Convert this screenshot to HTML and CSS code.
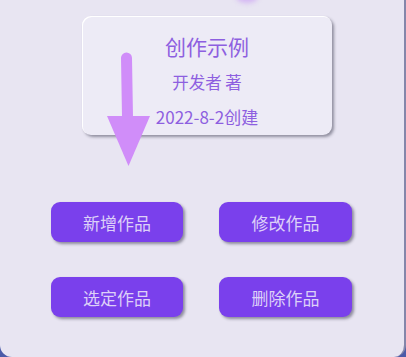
FILE: index.html
```html
<!DOCTYPE html>
<html lang="zh">
<head>
<meta charset="utf-8">
<link rel="stylesheet" href="styles.css">
</head>
<body>
<div class="panel">
  <div class="glow"></div>
  <div class="card">
    <div class="title">创作示例</div>
    <div class="author">开发者 著</div>
    <div class="date">2022-8-2创建</div>
  </div>
  <svg class="arrow" width="60" height="120" viewBox="0 0 60 120">
    <line x1="26.5" y1="8" x2="27.5" y2="67" stroke="#d08df9" stroke-width="11" stroke-linecap="round"/>
    <polygon points="7,66 50,66 28.5,116" fill="#d08df9"/>
  </svg>
  <div class="buttons">
    <div class="btn">新增作品</div>
    <div class="btn">修改作品</div>
    <div class="btn">选定作品</div>
    <div class="btn">删除作品</div>
  </div>
</div>
</body>
</html>
```

FILE: styles.css
```css
html, body {
  margin: 0;
  padding: 0;
  width: 406px;
  height: 357px;
  overflow: hidden;
  background: #4b5aa8;
  font-family: "Noto Sans CJK SC", "Noto Sans", sans-serif;
}
.panel {
  position: relative;
  width: 406px;
  height: 357px;
  box-sizing: border-box;
  background: #e8e5f2;
  border-right: 2px solid #8486aa;
  border-radius: 0 0 12px 12px;
  display: flex;
  flex-direction: column;
  padding-top: 16px;
}
.glow {
  position: absolute;
  left: 236px;
  top: -9px;
  width: 22px;
  height: 12px;
  border-radius: 50%;
  background: #d4b6f3;
  filter: blur(2.5px);
}
.card {
  margin-left: 82px;
  width: 250px;
  height: 119px;
  box-sizing: border-box;
  background: #edebf6;
  border-radius: 9px;
  box-shadow: inset 1px 1px 0 #ffffff, 2px 2px 3px rgba(40, 40, 60, 0.45);
  display: flex;
  flex-direction: column;
  align-items: center;
  color: #8d5fe0;
}
.title {
  font-size: 21px;
  line-height: 28px;
  margin-top: 16px;
}
.author {
  font-size: 16.5px;
  line-height: 22px;
  margin-top: 11px;
}
.date {
  font-size: 17px;
  line-height: 22px;
  margin-top: 13px;
}
.arrow {
  position: absolute;
  left: 100px;
  top: 50px;
}
.buttons {
  margin-top: 67px;
  margin-left: 51px;
  display: grid;
  grid-template-columns: 132px 133px;
  grid-auto-rows: 40px;
  column-gap: 36px;
  row-gap: 35px;
}
.btn {
  background: #7a40ec;
  color: #ddd0f8;
  border-radius: 9px;
  box-shadow: 2px 2px 3px rgba(30, 30, 50, 0.45);
  display: flex;
  align-items: center;
  justify-content: center;
  font-size: 17px;
}
```
